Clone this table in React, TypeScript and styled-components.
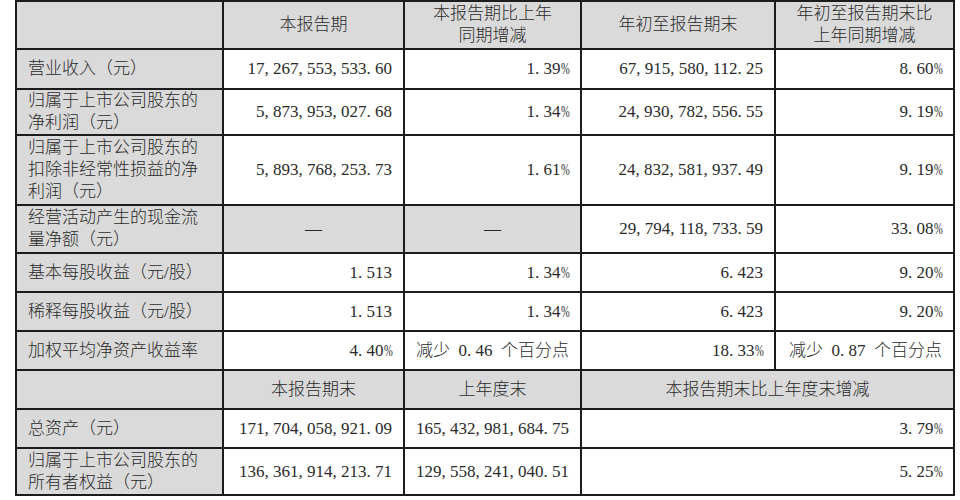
import styled, { createGlobalStyle } from "styled-components";

const GlobalStyle = createGlobalStyle`
  body {
    margin: 0;
    background: #ffffff;
  }
`;

const Page = styled.div`
  padding-left: 15px;
`;

const Table = styled.table`
  border-collapse: collapse;
  table-layout: fixed;
  width: 938px;
  font-family: "Liberation Serif", "Noto Sans CJK SC", serif;
  font-size: 17px;
  font-weight: 300;
  color: #2a2a2a;
`;

const Row = styled.tr<{ $h: number }>`
  height: ${(p) => p.$h}px;
`;

const Cell = styled.td<{ $align?: "left" | "right" | "center"; $shade?: boolean }>`
  border: 2px solid #1c1c1c;
  background: ${(p) => (p.$shade ? "#dadada" : "#ffffff")};
  text-align: ${(p) => p.$align ?? "right"};
  padding: 0 11px 0 11px;
  line-height: 22px;
  vertical-align: middle;
  white-space: nowrap;
  overflow: hidden;
`;

// SimSun style half-width punctuation and spaces
const Punct = styled.span`
  display: inline-block;
  width: 0.5em;
  text-align: left;
  white-space: pre;
`;

const Pct = styled.span`
  display: inline-block;
  width: 0.5em;
  transform: scaleX(0.62);
  transform-origin: left center;
`;

const Figure = ({ text }: { text: string }) => (
  <>
    {text.split(/([,. %])/).map((part, i) =>
      part === "%" ? (
        <Pct key={i}>%</Pct>
      ) : part === "," || part === "." || part === " " ? (
        <Punct key={i}>{part}</Punct>
      ) : (
        part
      )
    )}
  </>
);

const Lines = ({ lines }: { lines: string[] }) => (
  <>
    {lines.map((l, i) => (
      <span key={i}>
        {i > 0 && <br />}
        {l}
      </span>
    ))}
  </>
);

interface PeriodRow {
  label: string[];
  h: number;
  cells: string[];
}

const periodRows: PeriodRow[] = [
  {
    label: ["营业收入（元）"],
    h: 40,
    cells: ["17,267,553,533.60", "1.39%", "67,915,580,112.25", "8.60%"],
  },
  {
    label: ["归属于上市公司股东的", "净利润（元）"],
    h: 46,
    cells: ["5,873,953,027.68", "1.34%", "24,930,782,556.55", "9.19%"],
  },
  {
    label: ["归属于上市公司股东的", "扣除非经常性损益的净", "利润（元）"],
    h: 70,
    cells: ["5,893,768,253.73", "1.61%", "24,832,581,937.49", "9.19%"],
  },
  {
    label: ["经营活动产生的现金流", "量净额（元）"],
    h: 48,
    cells: ["—", "—", "29,794,118,733.59", "33.08%"],
  },
  {
    label: ["基本每股收益（元/股）"],
    h: 39,
    cells: ["1.513", "1.34%", "6.423", "9.20%"],
  },
  {
    label: ["稀释每股收益（元/股）"],
    h: 39,
    cells: ["1.513", "1.34%", "6.423", "9.20%"],
  },
  {
    label: ["加权平均净资产收益率"],
    h: 39,
    cells: ["4.40%", "减少 0.46 个百分点", "18.33%", "减少 0.87 个百分点"],
  },
];

const balanceRows: PeriodRow[] = [
  {
    label: ["总资产（元）"],
    h: 39,
    cells: ["171,704,058,921.09", "165,432,981,684.75", "3.79%"],
  },
  {
    label: ["归属于上市公司股东的", "所有者权益（元）"],
    h: 47,
    cells: ["136,361,914,213.71", "129,558,241,040.51", "5.25%"],
  },
];

export default function App() {
  return (
    <Page>
      <GlobalStyle />
      <Table>
        <colgroup>
          <col style={{ width: 207 }} />
          <col style={{ width: 181 }} />
          <col style={{ width: 177 }} />
          <col style={{ width: 194 }} />
          <col style={{ width: 179 }} />
        </colgroup>
        <tbody>
          <Row $h={48}>
            <Cell $shade />
            <Cell $shade $align="center">本报告期</Cell>
            <Cell $shade $align="center">
              <Lines lines={["本报告期比上年", "同期增减"]} />
            </Cell>
            <Cell $shade $align="center">年初至报告期末</Cell>
            <Cell $shade $align="center">
              <Lines lines={["年初至报告期末比", "上年同期增减"]} />
            </Cell>
          </Row>
          {periodRows.map((r) => (
            <Row key={r.label.join("")} $h={r.h}>
              <Cell $shade $align="left">
                <Lines lines={r.label} />
              </Cell>
              {r.cells.map((c, i) =>
                c === "—" ? (
                  <Cell key={i} $shade $align="center">
                    —
                  </Cell>
                ) : (
                  <Cell key={i}>
                    <Figure text={c} />
                  </Cell>
                )
              )}
            </Row>
          ))}
          <Row $h={39}>
            <Cell $shade />
            <Cell $shade $align="center">本报告期末</Cell>
            <Cell $shade $align="center">上年度末</Cell>
            <Cell $shade $align="center" colSpan={2}>
              本报告期末比上年度末增减
            </Cell>
          </Row>
          {balanceRows.map((r) => (
            <Row key={r.label.join("")} $h={r.h}>
              <Cell $shade $align="left">
                <Lines lines={r.label} />
              </Cell>
              <Cell>
                <Figure text={r.cells[0]} />
              </Cell>
              <Cell>
                <Figure text={r.cells[1]} />
              </Cell>
              <Cell colSpan={2}>
                <Figure text={r.cells[2]} />
              </Cell>
            </Row>
          ))}
        </tbody>
      </Table>
    </Page>
  );
}
